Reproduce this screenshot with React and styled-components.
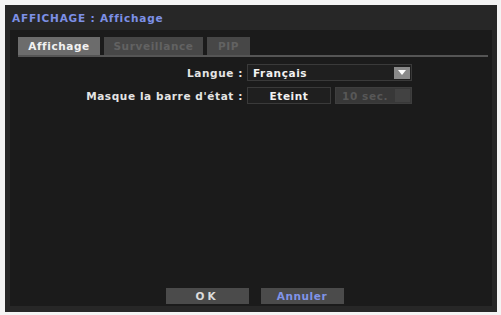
import React, { useState } from 'react';
import styled, { createGlobalStyle } from 'styled-components';

const GlobalStyle = createGlobalStyle`
  html, body {
    margin: 0;
    padding: 0;
    background: #f4f4f4;
  }
  body {
    font-family: 'DejaVu Sans', Verdana, sans-serif;
    letter-spacing: 0.6px;
  }
`;

const Screen = styled.div`
  width: 501px;
  height: 315px;
  padding: 5px 4px 3px 5px;
  box-sizing: border-box;
`;

const Frame = styled.div`
  height: 100%;
  background: #272727;
  display: flex;
  flex-direction: column;
  box-sizing: border-box;
  padding: 0 5px 6px 5px;
`;

const Title = styled.div`
  height: 25px;
  display: flex;
  align-items: center;
  padding-left: 2px;
  color: #7d90e6;
  font-size: 10.5px;
  font-weight: bold;
  letter-spacing: 0.8px;
`;

const Panel = styled.div`
  flex: 1;
  background: #1b1b1b;
  display: flex;
  flex-direction: column;
  padding: 7px 4px 0 8px;
`;

const TabBar = styled.div`
  display: flex;
  gap: 4px;
  border-bottom: 2px solid #555;
`;

const Tab = styled.div`
  height: 18px;
  width: ${p => p.$w}px;
  display: flex;
  align-items: center;
  justify-content: center;
  font-size: 10.5px;
  font-weight: bold;
  background: ${p => (p.$active ? '#6c6c6c' : '#474747')};
  color: ${p => (p.$active ? '#f2f2f2' : '#626262')};
  cursor: pointer;
`;

const Form = styled.div`
  display: flex;
  flex-direction: column;
  gap: 6px;
  padding-top: 7px;
`;

const Row = styled.div`
  display: grid;
  grid-template-columns: 225px auto;
  align-items: center;
  column-gap: 4px;
`;

const Label = styled.div`
  text-align: right;
  color: #e4e4e4;
  font-size: 10.5px;
  font-weight: bold;
  white-space: nowrap;
`;

const Fields = styled.div`
  display: flex;
  gap: 4px;
`;

const Select = styled.div`
  width: 165px;
  height: 17px;
  box-sizing: border-box;
  border: 1px solid #3a3a3a;
  background: #1f1f1f;
  display: flex;
  align-items: center;
  justify-content: space-between;
  padding: 0 1px 0 5px;
  color: #f2f2f2;
  font-size: 10.5px;
  font-weight: bold;
`;

const Arrow = styled.div`
  width: 16px;
  height: 12px;
  background: #8a8a8a;
  display: flex;
  align-items: center;
  justify-content: center;
`;

const Box = styled.div`
  width: ${p => p.$w}px;
  height: 17px;
  box-sizing: border-box;
  border: 1px solid ${p => (p.$disabled ? '#3e3e3e' : '#3a3a3a')};
  background: ${p => (p.$disabled ? '#383838' : '#1f1f1f')};
  color: ${p => (p.$disabled ? '#575757' : '#f2f2f2')};
  display: flex;
  align-items: center;
  justify-content: ${p => (p.$disabled ? 'flex-start' : 'center')};
  padding-left: ${p => (p.$disabled ? 6 : 0)}px;
  font-size: 10.5px;
  font-weight: bold;
  position: relative;
`;

const Spin = styled.div`
  position: absolute;
  right: 1px;
  top: 1px;
  bottom: 1px;
  width: 15px;
  background: #424242;
`;

const Spacer = styled.div`
  flex: 1;
`;

const Buttons = styled.div`
  display: flex;
  justify-content: center;
  gap: 12px;
  padding: 0 0 2px 0;
  margin-left: 3px;
`;

const Button = styled.button`
  width: 83px;
  height: 16px;
  border: none;
  padding: 0;
  background: #4b4b4b;
  color: ${p => (p.$blue ? '#8094e8' : '#dcdcdc')};
  font-family: inherit;
  font-size: 10.5px;
  font-weight: bold;
  letter-spacing: ${p => (p.$blue ? '0.6px' : '3px')};
  cursor: pointer;
`;

const tabs = [
  { name: 'Affichage', w: 82 },
  { name: 'Surveillance', w: 99 },
  { name: 'PIP', w: 43 },
];

export default function App() {
  const [active, setActive] = useState(0);
  return (
    <Screen>
      <GlobalStyle />
      <Frame>
        <Title>AFFICHAGE : Affichage</Title>
        <Panel>
          <TabBar>
            {tabs.map((t, i) => (
              <Tab key={t.name} $w={t.w} $active={i === active} onClick={() => setActive(i)}>
                {t.name}
              </Tab>
            ))}
          </TabBar>
          <Form>
            <Row>
              <Label>Langue :</Label>
              <Fields>
                <Select>
                  Français
                  <Arrow>
                    <svg width="8" height="5" viewBox="0 0 8 5">
                      <polygon points="0,0 8,0 4,5" fill="#fff" />
                    </svg>
                  </Arrow>
                </Select>
              </Fields>
            </Row>
            <Row>
              <Label>Masque la barre d'état :</Label>
              <Fields>
                <Box $w={84}>Eteint</Box>
                <Box $w={77} $disabled>
                  10 sec.
                  <Spin />
                </Box>
              </Fields>
            </Row>
          </Form>
          <Spacer />
          <Buttons>
            <Button>OK</Button>
            <Button $blue>Annuler</Button>
          </Buttons>
        </Panel>
      </Frame>
    </Screen>
  );
}
